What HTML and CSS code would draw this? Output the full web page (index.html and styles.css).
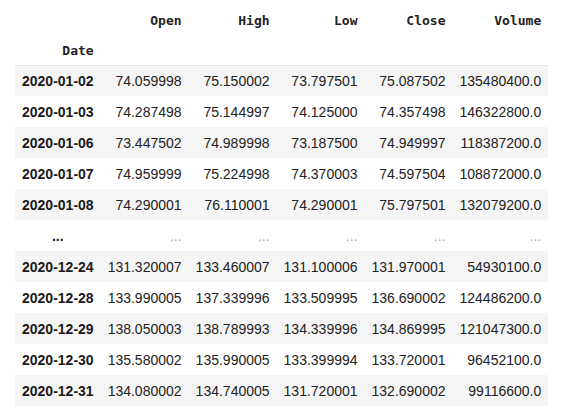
FILE: index.html
```html
<!DOCTYPE html>
<html>
<head>
<meta charset="utf-8">
<link rel="stylesheet" href="styles.css">
</head>
<body>
<table class="df">
  <thead>
    <tr class="cols">
      <th class="blank"></th>
      <th>Open</th><th>High</th><th>Low</th><th>Close</th><th>Volume</th>
    </tr>
    <tr class="idxname">
      <th>Date</th>
      <th></th><th></th><th></th><th></th><th></th>
    </tr>
  </thead>
  <tbody>
    <tr><th>2020-01-02</th><td>74.059998</td><td>75.150002</td><td>73.797501</td><td>75.087502</td><td>135480400.0</td></tr>
    <tr><th>2020-01-03</th><td>74.287498</td><td>75.144997</td><td>74.125000</td><td>74.357498</td><td>146322800.0</td></tr>
    <tr><th>2020-01-06</th><td>73.447502</td><td>74.989998</td><td>73.187500</td><td>74.949997</td><td>118387200.0</td></tr>
    <tr><th>2020-01-07</th><td>74.959999</td><td>75.224998</td><td>74.370003</td><td>74.597504</td><td>108872000.0</td></tr>
    <tr><th>2020-01-08</th><td>74.290001</td><td>76.110001</td><td>74.290001</td><td>75.797501</td><td>132079200.0</td></tr>
    <tr class="ellipsis"><th>...</th><td>...</td><td>...</td><td>...</td><td>...</td><td>...</td></tr>
    <tr><th>2020-12-24</th><td>131.320007</td><td>133.460007</td><td>131.100006</td><td>131.970001</td><td>54930100.0</td></tr>
    <tr><th>2020-12-28</th><td>133.990005</td><td>137.339996</td><td>133.509995</td><td>136.690002</td><td>124486200.0</td></tr>
    <tr><th>2020-12-29</th><td>138.050003</td><td>138.789993</td><td>134.339996</td><td>134.869995</td><td>121047300.0</td></tr>
    <tr><th>2020-12-30</th><td>135.580002</td><td>135.990005</td><td>133.399994</td><td>133.720001</td><td>96452100.0</td></tr>
    <tr><th>2020-12-31</th><td>134.080002</td><td>134.740005</td><td>131.720001</td><td>132.690002</td><td>99116600.0</td></tr>
  </tbody>
</table>
</body>
</html>
```
FILE: styles.css
```css
html, body {
  margin: 0;
  padding: 0;
  background: #ffffff;
}
body {
  padding: 3px 0 0 15px;
  font-family: "Liberation Sans", Arial, sans-serif;
  font-size: 14px;
  color: #222222;
}
.df {
  border-collapse: collapse;
  border-spacing: 0;
}
.df th, .df td {
  height: 31px;
  padding: 0 7px;
  text-align: right;
  vertical-align: middle;
  white-space: nowrap;
  box-sizing: border-box;
}
.df thead th {
  padding-top: 3px;
  font-family: "DejaVu Sans Mono", "Liberation Mono", monospace;
  font-size: 13px;
  font-weight: bold;
  color: #222222;
}
.df thead tr.idxname th {
  border-bottom: 1px solid #e6e6e6;
}
.df tbody th {
  font-weight: bold;
  color: #1a1a1a;
}
.df tbody tr:nth-child(odd) {
  background: #f5f5f5;
}
.df tbody tr.ellipsis th {
  text-align: center;
}
.df tbody tr.ellipsis td {
  color: #b0b0b0;
}
```
